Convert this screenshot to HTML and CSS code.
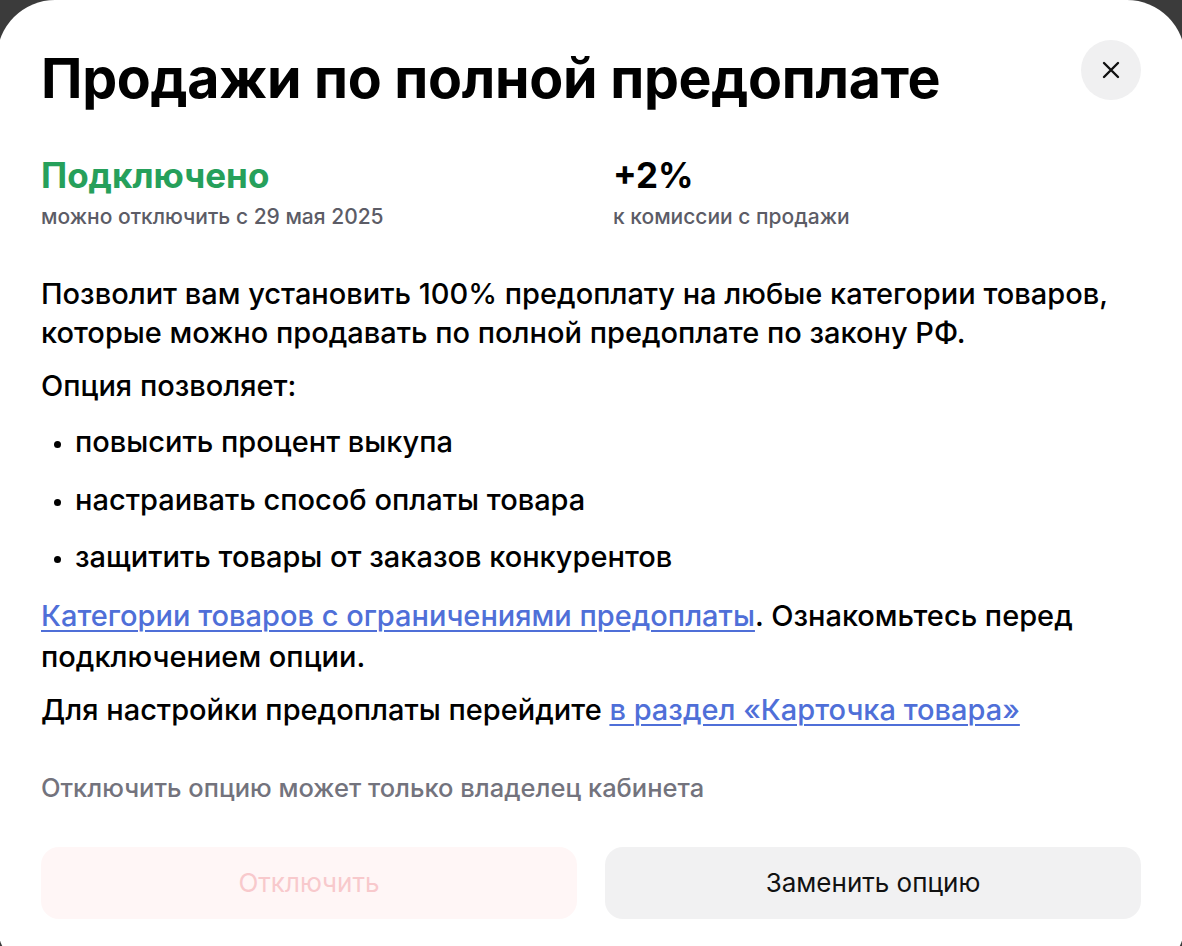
FILE: index.html
```html
<!DOCTYPE html>
<html>
<head>
  <title>Продажи по полной предоплате</title>
  <link rel="stylesheet" href="styles.css">
</head>
<body>
<div class="modal">
  <div class="header">
    <h1 class="title">Продажи по полной предоплате</h1>
    <button class="close" aria-label="Закрыть">
      <svg width="20" height="20" viewBox="0 0 20 20">
        <path d="M3 3 L17 17 M17 3 L3 17" stroke="#111" stroke-width="2.4" stroke-linecap="round" fill="none"/>
      </svg>
    </button>
  </div>

  <div class="stats">
    <div class="stat">
      <div class="stat-value green">Подключено</div>
      <div class="stat-label">можно отключить с 29 мая 2025</div>
    </div>
    <div class="stat">
      <div class="stat-value">+2%</div>
      <div class="stat-label">к комиссии с продажи</div>
    </div>
  </div>

  <div class="content">
    <p>Позволит вам установить 100% предоплату на любые категории товаров, которые можно продавать по полной предоплате по закону РФ.</p>
    <p>Опция позволяет:</p>
    <ul class="list">
      <li>повысить процент выкупа</li>
      <li>настраивать способ оплаты товара</li>
      <li>защитить товары от заказов конкурентов</li>
    </ul>
    <p class="wide"><a href="#">Категории товаров с ограничениями предоплаты</a>. Ознакомьтесь перед подключением опции.</p>
    <p>Для настройки предоплаты перейдите <a href="#">в раздел «Карточка товара»</a></p>
  </div>

  <div class="note">Отключить опцию может только владелец кабинета</div>

  <div class="actions">
    <button class="btn btn-disabled">Отключить</button>
    <button class="btn btn-gray">Заменить опцию</button>
  </div>
</div>
</body>
</html>
```

FILE: styles.css
```css
body {
  margin: 0;
  background: #3b3b3b;
  overflow: hidden;
  font-family: Inter, "Noto Sans", sans-serif;
  color: #000;
}
.modal {
  box-sizing: border-box;
  width: 1188px;
  height: 980px;
  margin-left: -3px;
  background: #fff;
  border-radius: 58px;
  padding: 38px 44px 0 44px;
}
.header {
  display: flex;
  justify-content: space-between;
  align-items: flex-start;
}
.title {
  margin: 0;
  font-size: 55.5px;
  font-weight: 700;
  line-height: 80px;
  letter-spacing: -0.3px;
}
.close {
  width: 60px;
  height: 60px;
  margin-top: 2px;
  border: none;
  border-radius: 50%;
  background: #f0f0f1;
  display: flex;
  align-items: center;
  justify-content: center;
  padding: 0;
}
.stats {
  display: flex;
  margin-top: 36px;
}
.stat {
  flex: 0 0 572px;
}
.stat-value {
  font-size: 35px;
  font-weight: 700;
  line-height: 42px;
}
.green {
  color: #26a05b;
}
.stat-label {
  margin-top: 8px;
  font-size: 21px;
  font-weight: 500;
  line-height: 26px;
  color: #5c5c66;
}
.content {
  margin-top: 44px;
  font-size: 29px;
  font-weight: 500;
  line-height: 39px;
}
.content p {
  margin: 0 0 14px 0;
}
.content p.wide {
  line-height: 41px;
  margin-bottom: 13px;
}
.content a {
  color: #4f6fd8;
  text-decoration: underline;
  text-underline-offset: 4px;
  text-decoration-thickness: 1.5px;
}
.list {
  margin: 17px 0 0 0;
  padding: 0 0 0 34px;
}
.list li {
  margin-bottom: 18.5px;
}
.list li::marker {
  font-size: 22px;
}
.note {
  margin-top: 44px;
  font-size: 25.5px;
  font-weight: 500;
  line-height: 30px;
  color: #73737d;
}
.actions {
  display: flex;
  gap: 28px;
  margin-top: 44px;
}
.btn {
  flex: 1;
  height: 72px;
  border: none;
  border-radius: 18px;
  font-family: Inter, "Noto Sans", sans-serif;
  font-size: 26px;
}
.btn-disabled {
  background: #fff6f6;
  color: #f8c9cc;
}
.btn-gray {
  background: #f1f1f2;
  color: #111;
}
```
